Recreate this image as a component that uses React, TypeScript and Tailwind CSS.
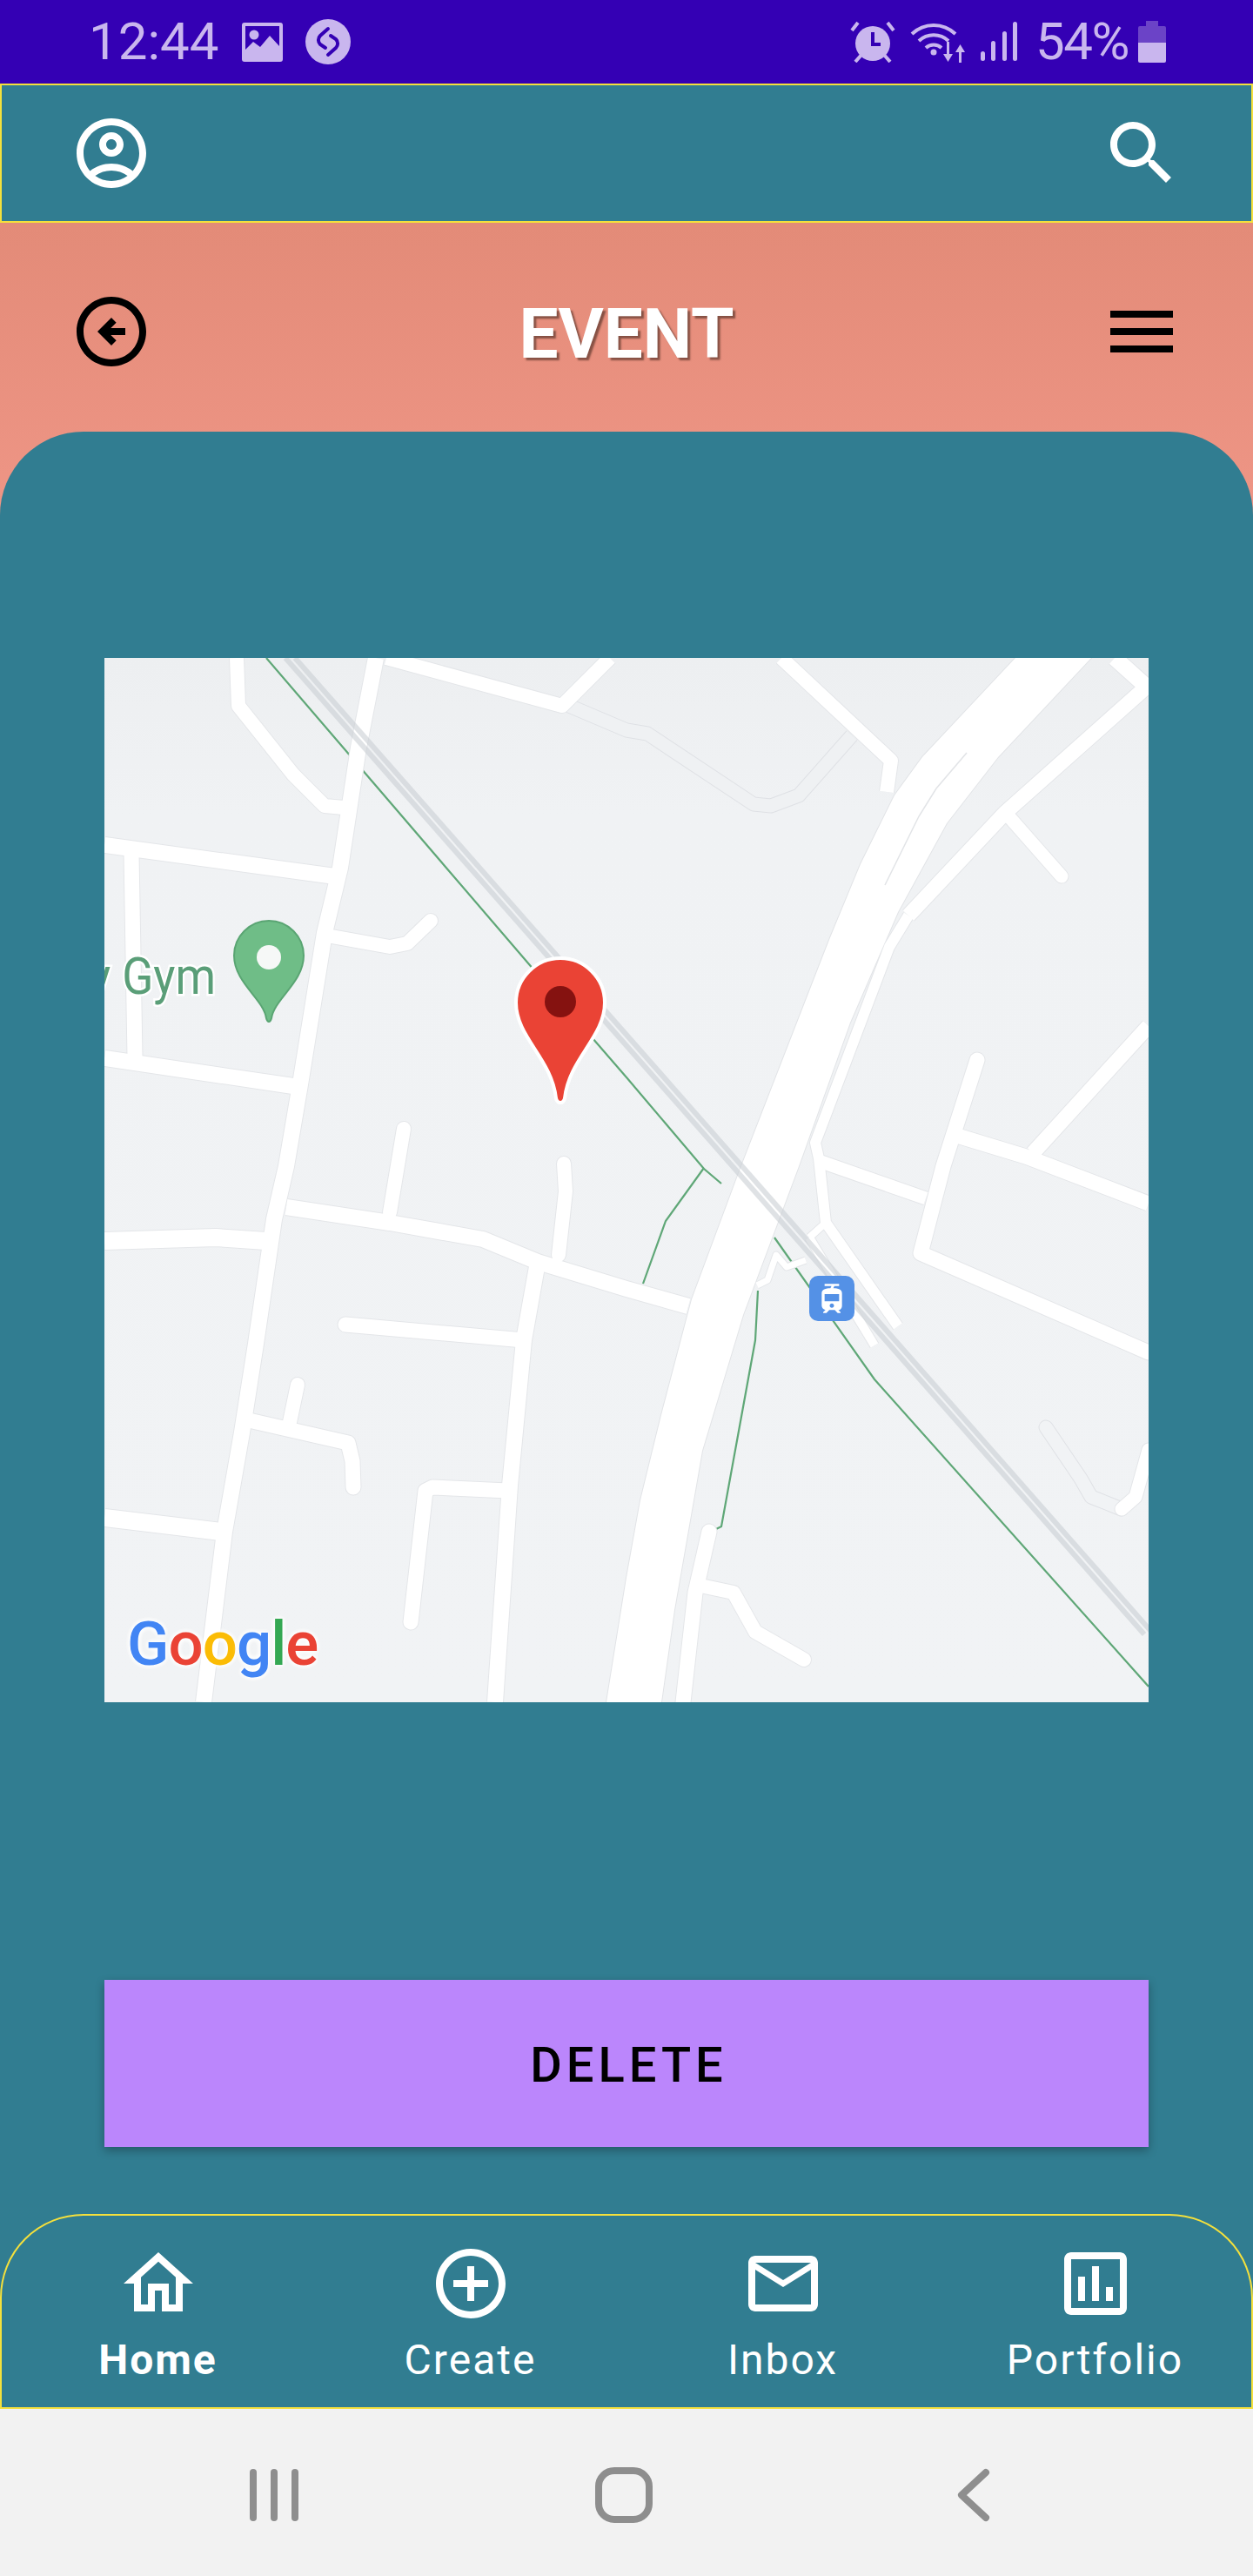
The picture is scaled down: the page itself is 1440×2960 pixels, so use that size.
import React from "react";

const LIGHT = "#c9b6ee";
const DARK = "#3400b4";

type Road = { p: string; w: number; cap?: "round" | "butt" };

const roads: Road[] = [
  { p: "312,0 292,103 271,241 253,316 225,490 209,584 195,645 174,788 158,890 138,1004 114,1200", w: 16 },
  { p: "324,0 526,55 581,0", w: 14 },
  { p: "152,0 154,55 217,134 253,170 275,172", w: 14 },
  { p: "0,215 265,251", w: 16 },
  { p: "31,225 35,458", w: 15 },
  { p: "0,460 217,492", w: 16 },
  { p: "261,320 328,332 348,328 375,302", w: 14, cap: "round" },
  { p: "344,541 328,637", w: 14, cap: "round" },
  { p: "528,581 530,613 522,686", w: 14, cap: "round" },
  { p: "0,670 128,666 186,670", w: 18 },
  { p: "209,631 328,649 435,668 498,694 600,725 671,745", w: 16 },
  { p: "277,766 482,784", w: 15, cap: "round" },
  { p: "498,694 482,784 466,951 449,1200", w: 16 },
  { p: "222,835 213,878", w: 14, cap: "round" },
  { p: "166,876 280,902 285,923 286,953", w: 15, cap: "round" },
  { p: "0,988 134,1004", w: 18 },
  { p: "464,957 377,953 369,957 352,1108", w: 15, cap: "round" },
  { p: "924,296 902,332 817,557 821,575 829,649 912,768", w: 10 },
  { p: "810,666 829,649", w: 6 },
  { p: "810,666 885,790", w: 8 },
  { p: "1200,31 1035,178 924,296", w: 15 },
  { p: "1161,0 1200,35", w: 16 },
  { p: "1041,184 1100,251", w: 13, cap: "round" },
  { p: "778,0 904,118 899,154", w: 14 },
  { p: "1003,462 964,584 938,684 1200,798", w: 15, cap: "round" },
  { p: "980,549 1059,573 1200,627", w: 15 },
  { p: "1200,423 1067,569", w: 15 },
  { p: "821,578 944,621", w: 13 },
  { p: "1200,910 1185,964 1169,978", w: 13, cap: "round" },
  { p: "695,1004 679,1074 665,1200", w: 15, cap: "round" },
  { p: "685,1066 723,1074 748,1119 804,1151", w: 14, cap: "round" },
  { p: "750,721 762,715 772,686 784,700 806,692", w: 5 },
];

const HIGHWAY =
  "1047,0 940,114 908,158 869,237 833,324 730,589 675,737 640,870 616,968 600,1057 577,1200 640,1200 655,1094 687,911 734,755 798,584 857,419 912,292 968,190 1027,114 1134,0";

function Line({ points, color, width }: { points: string; color: string; width: number }) {
  return <polyline points={points} fill="none" stroke={color} strokeWidth={width} strokeLinejoin="round" />;
}

function MapDrawing() {
  return (
    <svg viewBox="0 0 1200 1200" className="absolute inset-0 h-full w-full">
      <defs>
        <linearGradient id="land" x1="0" y1="0" x2="0" y2="1">
          <stop offset="0" stopColor="#edeff1" />
          <stop offset="0.15" stopColor="#f0f2f4" />
          <stop offset="1" stopColor="#f1f3f5" />
        </linearGradient>
      </defs>
      <rect width="1200" height="1200" fill="url(#land)" />
      {/* faint footpaths */}
      <Line points="534,55 600,83 624,87 746,168 766,170 798,158 859,89" color="#dfe1e5" width={17} />
      <Line points="534,55 600,83 624,87 746,168 766,170 798,158 859,89" color="#eff1f3" width={15} />
      <polyline points="1082,884 1122,943 1134,964 1169,978" fill="none" stroke="#dfe1e5" strokeWidth={17} strokeLinecap="round" strokeLinejoin="round" />
      <polyline points="1082,884 1122,943 1134,964 1169,978" fill="none" stroke="#f1f3f5" strokeWidth={15} strokeLinecap="round" strokeLinejoin="round" />
      {/* green transit lines */}
      <g fill="none" stroke="#5fa777" strokeWidth={2.2}>
        <polyline points="186,0 488,352 561,437 600,482 689,587 709,604" />
        <polyline points="689,586 645,647 619,719" />
        <polyline points="770,666 885,829 1200,1182" />
        <polyline points="751,727 748,784 709,998 703,1001" />
      </g>
      {/* road outlines */}
      <polygon points={HIGHWAY} fill="#fff" stroke="#e2e4e7" strokeWidth={2} />
      {roads.map((r, i) => (
        <polyline key={`o${i}`} points={r.p} fill="none" stroke="#e4e6e9" strokeWidth={r.w + 4} strokeLinecap={r.cap ?? "butt"} strokeLinejoin="round" />
      ))}
      {roads.map((r, i) => (
        <polyline key={`r${i}`} points={r.p} fill="none" stroke="#fff" strokeWidth={r.w + 2} strokeLinecap={r.cap ?? "butt"} strokeLinejoin="round" />
      ))}
      <polygon points={HIGHWAY} fill="#fff" />
      <polyline points="991,109 956,150 936,182 897,261" fill="none" stroke="#e2e4e7" strokeWidth={1.5} />
      {/* rail */}
      <g fill="none" stroke="#c9ced3" strokeOpacity={0.6} strokeWidth={6}>
        <line x1="208" y1="0" x2="1195" y2="1122" />
        <line x1="219" y1="0" x2="1206" y2="1122" />
      </g>
      {/* Gym POI */}
      <g transform="translate(128 386) scale(0.9 1)">
        <text
          x="0"
          y="0"
          textAnchor="end"
          fontFamily="Roboto, sans-serif"
          fontSize="59"
          fill="#5a9e78"
          stroke="#fff"
          strokeWidth="5"
          paintOrder="stroke"
        >
          y Gym
        </text>
      </g>
      <path d="M189 302C211 302 229 320 229 342C229 373 195 392 192 414Q191 418 189 418Q187 418 186 414C183 392 149 373 149 342C149 320 167 302 189 302Z" fill="#6fbd87" stroke="#5aa573" strokeWidth="2" />
      <circle cx="189" cy="344" r="14" fill="#f6f8f7" />
      {/* transit tile */}
      <rect x="810" y="710" width="52" height="52" rx="10" fill="#5491e6" />
      <svg x="816" y="716" width="40" height="40" viewBox="0 0 24 24">
        <path fill="#fff" d="M19 16.94V8.5c0-2.79-2.61-3.4-6.01-3.49l.76-1.51H17V2H7v1.5h4.75l-.76 1.52C7.86 5.11 5 5.73 5 8.5v8.44c0 1.45 1.19 2.66 2.59 2.97L6 21.5v.5h2.23l2-2H14l2 2h2v-.5L16.5 20h-.08c1.69 0 2.58-1.37 2.58-3.06zm-7 1.56c-.83 0-1.5-.67-1.5-1.5s.67-1.5 1.5-1.5 1.5.67 1.5 1.5-.67 1.5-1.5 1.5zm5-4.5H7V9h10v5z" />
      </svg>
      {/* red marker */}
      <path d="M524 345C552 345 575 368 575 396C575 436 534 460 529 506Q528 511 524 511Q520 511 519 506C514 460 473 436 473 396C473 368 496 345 524 345Z" fill="#ea4335" stroke="#fff" strokeWidth="4" />
      <circle cx="524" cy="395" r="18" fill="#851210" />
    </svg>
  );
}

function Icon({ d, size = 96, color = "#fff" }: { d: string; size?: number; color?: string }) {
  return (
    <svg width={size} height={size} viewBox="0 0 24 24" className="shrink-0">
      <path d={d} fill={color} />
    </svg>
  );
}

const ACCOUNT =
  "M12 2C6.48 2 2 6.48 2 12s4.48 10 10 10 10-4.48 10-10S17.52 2 12 2zM7.35 18.5C8.66 17.56 10.26 17 12 17s3.34.56 4.65 1.5C15.34 19.44 13.74 20 12 20s-3.34-.56-4.65-1.5zm10.79-1.38C16.45 15.8 14.32 15 12 15s-4.45.8-6.14 2.12C4.7 15.73 4 13.95 4 12c0-4.42 3.58-8 8-8s8 3.58 8 8c0 1.95-.7 3.73-1.86 5.12zM12 6c-1.93 0-3.5 1.57-3.5 3.5S10.07 13 12 13s3.5-1.57 3.5-3.5S13.93 6 12 6zm0 5c-.83 0-1.5-.67-1.5-1.5S11.17 8 12 8s1.5.67 1.5 1.5S12.83 11 12 11z";
const SEARCH =
  "M15.5 14h-.79l-.28-.27C15.41 12.59 16 11.11 16 9.5 16 5.91 13.09 3 9.5 3S3 5.91 3 9.5 5.91 16 9.5 16c1.61 0 3.09-.59 4.23-1.57l.27.28v.79l5 4.99L20.49 19l-4.99-5zm-6 0C7.01 14 5 11.99 5 9.5S7.01 5 9.5 5 14 7.01 14 9.5 11.99 14 9.5 14z";
const BACK =
  "M2 12c0 5.52 4.48 10 10 10 5.52 0 10-4.48 10-10S17.52 2 12 2 2 6.48 2 12zm18 0c0 4.42-3.58 8-8 8s-8-3.58-8-8 3.58-8 8-8 8 3.58 8 8zM8 12l4-4 1.41 1.41L11.83 11H16v2h-4.17l1.59 1.59L12 16l-4-4z";
const MENU = "M3 18h18v-2H3v2zm0-5h18v-2H3v2zm0-7v2h18V6H3z";
const HOME = "M12 5.69l5 4.5V18h-2v-6H9v6H7v-7.81l5-4.5M12 3L2 12h3v8h6v-6h2v6h6v-8h3L12 3z";
const ADD =
  "M13 7h-2v4H7v2h4v4h2v-4h4v-2h-4V7zm-1-5C6.48 2 2 6.48 2 12s4.48 10 10 10 10-4.48 10-10S17.52 2 12 2zm0 18c-4.41 0-8-3.59-8-8s3.59-8 8-8 8 3.59 8 8-3.59 8-8 8z";
const MAIL =
  "M22 6c0-1.1-.9-2-2-2H4c-1.1 0-2 .9-2 2v12c0 1.1.9 2 2 2h16c1.1 0 2-.9 2-2V6zm-2 0l-8 5-8-5h16zm0 12H4V8l8 5 8-5v10z";
const CHART =
  "M19 3H5c-1.1 0-2 .9-2 2v14c0 1.1.9 2 2 2h14c1.1 0 2-.9 2-2V5c0-1.1-.9-2-2-2zm0 16H5V5h14v14zM7 10h2v7H7zm4-3h2v10h-2zm4 6h2v4h-2z";

function StatusBar() {
  return (
    <div className="flex h-24 shrink-0 items-center justify-between bg-[#3400b4] pl-[102px] pr-[100px] font-['Roboto',sans-serif] text-[60px] font-normal text-[#c9b6ee]">
      <div className="flex items-center">
        <span className="w-[150px] leading-none">12:44</span>
        <svg width="47" height="45" viewBox="0 0 47 45" className="ml-[26px]">
          <rect width="47" height="45" rx="3" fill={LIGHT} />
          <rect x="4" y="4" width="39" height="37" fill={DARK} />
          <circle cx="14" cy="14" r="5.5" fill={LIGHT} />
          <polygon points="4,41 4,31 13,22 21,28 32,15 43,27 43,41" fill={LIGHT} />
        </svg>
        <svg width="52" height="52" viewBox="0 0 52 52" className="ml-[26px]">
          <circle cx="26" cy="26" r="26" fill={LIGHT} />
          <path d="M26 11L17 19a7 7 0 0 0 0 10L23 33" fill="none" stroke={DARK} strokeWidth="4" strokeLinecap="round" />
          <path d="M26 41L35 33a7 7 0 0 0 0-10L29 19" fill="none" stroke={DARK} strokeWidth="4" strokeLinecap="round" />
        </svg>
      </div>
      <div className="flex items-center">
        <svg width="52" height="48" viewBox="0 0 52 48">
          <circle cx="26" cy="26" r="20" fill={LIGHT} />
          <path d="M26 13V27H35" fill="none" stroke={DARK} strokeWidth="4" />
          <g stroke={LIGHT} strokeWidth="4">
            <line x1="2" y1="11" x2="9" y2="2" />
            <line x1="50" y1="11" x2="43" y2="2" />
            <line x1="6" y1="47" x2="13" y2="39" />
            <line x1="46" y1="47" x2="39" y2="39" />
          </g>
        </svg>
        <svg width="66" height="48" viewBox="0 0 66 48" className="ml-[17px]">
          <g fill="none" stroke={LIGHT} strokeWidth="4">
            <path d="M2 15a36 36 0 0 1 50 0" />
            <path d="M10 23a25 25 0 0 1 34 0" />
            <path d="M18 31a13 13 0 0 1 18 0" />
          </g>
          <circle cx="27" cy="36" r="3.5" fill={LIGHT} />
          <path d="M42 24h3v14h4l-5.5 9-5.5-9h4z" fill={LIGHT} />
          <path d="M56 48h3V36h4l-5.5-9-5.5 9h4z" fill={LIGHT} />
        </svg>
        <svg width="44" height="46" viewBox="0 0 44 46" className="ml-[15px]">
          <rect x="0" y="34" width="5" height="11" rx="2.5" fill={LIGHT} />
          <rect x="12" y="22" width="5" height="23" rx="2.5" fill={LIGHT} />
          <rect x="25" y="11" width="5" height="34" rx="2.5" fill={LIGHT} />
          <rect x="37" y="0" width="5" height="45" rx="2.5" fill={LIGHT} />
        </svg>
        <span className="ml-[19px] w-[114px] leading-none tracking-[-1.5px]">54%</span>
        <svg width="32" height="48" viewBox="0 0 32 48" className="ml-[4px]">
          <path d="M9 0h14v6h7a2 2 0 0 1 2 2v17H0V8a2 2 0 0 1 2-2h7z" fill="#6b43c7" />
          <path d="M0 25h32v21a2 2 0 0 1-2 2H2a2 2 0 0 1-2-2z" fill={LIGHT} />
        </svg>
      </div>
    </div>
  );
}

function NavItem({ d, label, active }: { d: string; label: string; active?: boolean }) {
  return (
    <div className="flex w-[360px] flex-col items-center">
      <Icon d={d} />
      <span className={`mt-[8px] text-[48px] leading-[64px] tracking-[2px] text-white ${active ? "font-bold" : "font-normal"}`}>{label}</span>
    </div>
  );
}

export default function App() {
  return (
    <div className="flex h-[2960px] w-[1440px] flex-col overflow-hidden font-['Roboto',sans-serif]">
      <StatusBar />
      <div className="flex h-40 shrink-0 items-center justify-between border-2 border-[#f4e03c] bg-[#317d91] px-[78px]">
        <Icon d={ACCOUNT} />
        <Icon d={SEARCH} />
      </div>
      <div className="flex flex-1 flex-col bg-gradient-to-b from-[#e38b78] to-[#ee9585] to-[14%]">
        <div className="flex h-[240px] shrink-0 items-center justify-between px-20 pt-[10px]">
          <Icon d={BACK} color="#000" />
          <span className="mt-[6px] text-[80px] font-bold leading-none text-white [text-shadow:3px_3px_2px_rgba(70,40,30,0.6)]">EVENT</span>
          <Icon d={MENU} color="#000" />
        </div>
        <div className="flex flex-1 flex-col rounded-t-[96px] bg-[#317d91] px-[120px] pt-[260px]">
          <div className="relative h-[1200px] w-[1200px] overflow-hidden">
            <MapDrawing />
            <div className="absolute left-[26px] top-[1083px] text-[71px] font-medium leading-[100px] tracking-[-1px] [text-shadow:0_0_6px_#fff,0_0_6px_#fff,0_0_6px_#fff]">
              <span className="text-[#4285f4]">G</span>
              <span className="text-[#ea4335]">o</span>
              <span className="text-[#fbbc05]">o</span>
              <span className="text-[#4285f4]">g</span>
              <span className="text-[#34a853]">l</span>
              <span className="text-[#ea4335]">e</span>
            </div>
          </div>
          <button className="mt-[319px] flex h-[192px] w-[1200px] items-center justify-center bg-[#bb86fc] pl-[5px] pt-1 text-[56px] font-medium tracking-[5px] text-black shadow-[0_4px_10px_rgba(0,0,0,0.3)]">
            DELETE
          </button>
        </div>
      </div>
      <div className="h-[224px] shrink-0 bg-[#317d91]">
        <div className="flex h-full items-start rounded-t-[96px] border-2 border-[#f4e03c] pt-[30px]">
          <NavItem d={HOME} label="Home" active />
          <NavItem d={ADD} label="Create" />
          <NavItem d={MAIL} label="Inbox" />
          <NavItem d={CHART} label="Portfolio" />
        </div>
      </div>
      <div className="relative flex h-[192px] shrink-0 items-start bg-[#f2f2f2] pl-[287px] pt-[69px]">
        <div className="flex gap-4">
          <div className="h-[60px] w-2 rounded-full bg-[#8e8e8e]" />
          <div className="h-[60px] w-2 rounded-full bg-[#8e8e8e]" />
          <div className="h-[60px] w-2 rounded-full bg-[#8e8e8e]" />
        </div>
        <div className="ml-[341px] mt-[-2px] h-16 w-[66px] rounded-[22px] border-[8px] border-[#8e8e8e]" />
        <svg width="40" height="64" viewBox="0 0 40 64" className="ml-[349px] mt-[-2px]">
          <path d="M34 6L6 32L34 58" fill="none" stroke="#8e8e8e" strokeWidth="8" strokeLinecap="round" strokeLinejoin="round" />
        </svg>
      </div>
    </div>
  );
}
